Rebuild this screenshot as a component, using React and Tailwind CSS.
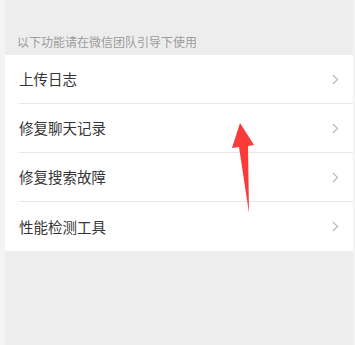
import React from 'react';

const items = ['上传日志', '修复聊天记录', '修复搜索故障', '性能检测工具'];

const Chevron = () => (
    <svg width="7" height="11" viewBox="0 0 7 11" fill="none">
        <path d="M1 1l4.5 4.5L1 10" stroke="#b8b8b8" strokeWidth="1.2" />
    </svg>
);

const App = () => (
    <div
        className="relative flex w-[355px] h-[345px] overflow-hidden bg-[#f4f4f4]"
        style={{ fontFamily: '"Noto Sans CJK SC", "Noto Sans", sans-serif' }}
    >
        <div className="w-[5px] shrink-0" />
        <div className="flex-1 bg-[#ededed] flex flex-col">
            <div className="h-[55px] flex items-end pb-[6px] pl-[12px]">
                <span className="text-[12px] leading-[15px] text-[#9c9c9c]">以下功能请在微信团队引导下使用</span>
            </div>
            <div className="bg-white">
                {items.map((item, index) => (
                    <div key={index} className="pl-[14px]">
                        <div
                            className={`h-[49px] flex items-center justify-between pr-[14px] ${index < items.length - 1 ? 'border-b border-[#e8e8e8]' : ''}`}
                        >
                            <span className="text-[14.5px] text-[#353535]">{item}</span>
                            <Chevron />
                        </div>
                    </div>
                ))}
            </div>
        </div>
        <div className="w-[2px] shrink-0" />
        <svg className="absolute left-0 top-0" width="355" height="345" viewBox="0 0 355 345">
            <path d="M240 123 L254 145 L248 146 L249 213 L239 147 L232 148 Z" fill="#fb3a3a" />
        </svg>
    </div>
);

export default App;
